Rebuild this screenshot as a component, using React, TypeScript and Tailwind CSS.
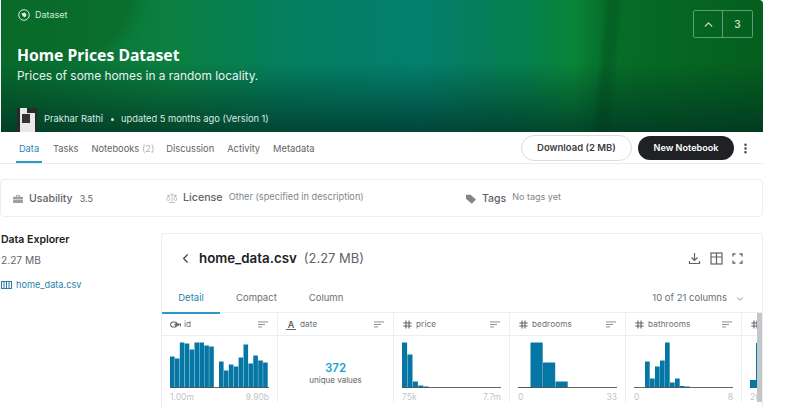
import React from "react";
import { ChevronUp, ChevronLeft, ChevronDown, Scale, MoreVertical } from "lucide-react";

const Sort = () => (
  <svg width="10" height="8" viewBox="0 0 10 8" className="text-[#80868b]" fill="currentColor">
    <rect x="0" y="0.5" width="10" height="0.9" />
    <rect x="0" y="3" width="7" height="0.9" />
    <rect x="0" y="5.5" width="4" height="0.9" />
  </svg>
);

const HashGlyph = ({ className }: { className?: string }) => (
  <svg width="9" height="9" viewBox="0 0 9 9" fill="none" stroke="#5f6368" strokeWidth="1.1" className={className}>
    <path d="M3 0.5v8M6 0.5v8M0.3 3h8.4M0.3 6h8.4" />
  </svg>
);

const Hist = ({ w, bars, start = 0, bw }: { w: number; bars: number[]; start?: number; bw: number }) => (
  <svg width={w} height="47" viewBox={`0 0 ${w} 47`} className="block">
    {bars.map((h, i) =>
      h > 0 ? <rect key={i} x={start + i * bw} y={46.5 - h} width={bw - 0.3} height={h} fill="#0677a5" /> : null
    )}
    <rect x="0" y="46" width={w} height="0.8" fill="#3c4043" />
  </svg>
);

const Column = ({
  icon,
  name,
  children,
  min,
  max,
}: {
  icon: React.ReactNode;
  name: string;
  children: React.ReactNode;
  min?: string;
  max?: string;
}) => (
  <div className="w-[116px] shrink-0 border-r border-[#eceef0]">
    <div className="h-[23px] pt-[1px] flex items-center pl-2 pr-[9px] border-b border-[#eceef0]">
      <span className="w-[11px] flex items-center shrink-0">{icon}</span>
      <span className="text-[8.2px] tracking-[0.1px] text-[#6b6f74] ml-[3px] flex-1">{name}</span>
      <Sort />
    </div>
    <div className="h-[66px] px-2 pt-[5px]">
      {children}
      {min !== undefined && (
        <div className="flex justify-between text-[8.5px] leading-[10px] mt-[4px] text-[#c2c5c9]">
          <span>{min}</span>
          <span>{max}</span>
        </div>
      )}
    </div>
  </div>
);

const HashIcon = <HashGlyph className="ml-[1px]" />;

export default function App() {
  return (
    <div className="w-[800px] h-[408px] overflow-hidden bg-white font-['Inter',sans-serif]">
      <div className="w-[763px]">
        <header className="relative ml-[1px] h-[132px] overflow-hidden rounded-tr-[4px] pl-[16px] text-white bg-[linear-gradient(90deg,#086a2c_0%,#0b8040_22%,#047f62_39%,#03806f_55%,#067d5a_63%,#05804c_69%,#0a8538_75%,#05702a_79%,#066a24_84%,#055f1e_100%)]">
          <div className="absolute -left-[60px] -top-[90px] w-[200px] h-[150px] rounded-full bg-[#0a6a28]/70 blur-[6px]" />
          <div className="absolute left-[600px] -top-[20px] w-[14px] h-[170px] rotate-[5deg] bg-[#04551f]/50 blur-[2px]" />
          <div className="absolute inset-x-0 bottom-0 h-[70px] bg-[linear-gradient(180deg,rgba(0,40,30,0)_0%,rgba(0,45,35,0.7)_100%)]" />
          <div className="relative flex items-center h-[30px]">
            <svg width="12" height="12" viewBox="0 0 12 12" fill="none" className="ml-[1px]">
              <circle cx="6" cy="6" r="5.3" stroke="#d7efe4" strokeWidth="1" />
              <path d="M3.5 4.5 L7 3.5 L8.5 6 L7 8.5 L4.5 7 Z" fill="#d7efe4" />
            </svg>
            <span className="ml-[5px] text-[9px] text-[#cfe9dc]">Dataset</span>
          </div>
          <h1 className="relative mt-[13px] text-[15.7px] leading-[24px] font-bold font-['Noto_Sans',sans-serif]">
            Home Prices Dataset
          </h1>
          <p className="relative text-[11.9px] leading-[18px] text-[#e6f4ee]">Prices of some homes in a random locality.</p>
          <div className="absolute left-[16px] bottom-0 flex h-[24px]">
            <div className="w-[20px] h-[24px] bg-[#e8e8e8] relative overflow-hidden">
              <div className="absolute left-0 top-0 w-[3px] h-[24px] bg-[#2a2a2a]" />
              <div className="absolute right-0 top-0 w-[2px] h-[24px] bg-[#2a2a2a]" />
              <div className="absolute left-[5px] top-[6px] w-[8px] h-[9px] bg-[#333]" />
              <div className="absolute left-[10px] top-0 w-[10px] h-[5px] bg-[#2a2a2a]" />
            </div>
            <div className="flex items-center h-[22px]">
              <span className="ml-[7px] text-[9.4px] text-[#d6ebe2]">Prakhar Rathi</span>
              <span className="ml-[8px] w-[3px] h-[3px] rounded-full bg-[#d6ebe2]" />
              <span className="ml-[7px] text-[9.3px] text-[#d6ebe2]">updated 5 months ago (Version 1)</span>
            </div>
          </div>
          <div className="absolute right-[10px] top-[10px] flex w-[60px] h-[28px] rounded-[2px] border border-[#5f9c78]">
            <div className="w-[29px] flex items-center justify-center border-r border-[#5f9c78]">
              <ChevronUp size={13} strokeWidth={2.5} className="text-[#c4dccf]" />
            </div>
            <div className="flex-1 flex items-center justify-center text-[10px] font-semibold text-[#c4dccf]">3</div>
          </div>
        </header>

        <nav className="h-[32px] flex items-center border-b border-[#e8eaed] pl-[16px] text-[#5f6368] text-[9.3px]">
          <div className="relative h-[31px] w-[26px] pt-[2px] flex items-center justify-center text-[#2a86b4]">
            Data
            <div className="absolute left-0 right-0 bottom-0 h-[2px] bg-[#2a9ac6]" />
          </div>
          <span className="ml-[11px] mt-[2px]">Tasks</span>
          <span className="ml-[13px] mt-[2px]">Notebooks <span className="text-[#b0b3b8]">(2)</span></span>
          <span className="ml-[12px] mt-[2px]">Discussion</span>
          <span className="ml-[13px] mt-[2px]">Activity</span>
          <span className="ml-[13px] mt-[2px]">Metadata</span>
          <div className="ml-auto flex items-center mt-[1px]">
            <div className="w-[111px] h-[26px] flex items-center justify-center rounded-full border border-[#dadce0] text-[9.5px] font-semibold text-[#3c4043]">
              Download (2 MB)
            </div>
            <div className="ml-[6px] w-[96px] h-[24px] flex items-center justify-center rounded-full bg-[#202124] text-[9.1px] font-semibold text-white">
              New Notebook
            </div>
            <MoreVertical size={13} strokeWidth={2.5} className="ml-[5px] mr-[11px] text-[#3c4043]" />
          </div>
        </nav>

        <section className="mt-[15px] h-[38px] pt-[1px] rounded-[4px] border border-[#eceef0] flex items-center relative text-[#5f6368]">
          <div className="w-[165px] flex items-center pl-[12px] shrink-0">
            <svg width="10" height="9" viewBox="0 0 11 10" fill="#9aa0a6">
              <path d="M3.5 3V1.2h4V3H11v2.8H0V3zM4.5 2v1h2V2zM0 6.5h11V10H0z" />
            </svg>
            <span className="ml-[6px] text-[10.5px] font-medium">Usability</span>
            <span className="ml-[7px] text-[9px]">3.5</span>
          </div>
          <div className="w-[300px] flex items-center shrink-0">
            <Scale size={12} strokeWidth={1.3} className="text-[#a8adb2]" />
            <span className="ml-[5px] text-[10.7px] font-medium">License</span>
            <span className="ml-[6px] text-[9.2px] text-[#80868b] -mt-[3px]">Other (specified in description)</span>
          </div>
          <div className="flex items-center">
            <svg width="10" height="10" viewBox="0 0 10 10" fill="#80868b">
              <path d="M0 0.8h4.5L10 5.6 5.8 9.8 0 4.8z" />
            </svg>
            <span className="ml-[6px] text-[10.5px] font-medium">Tags</span>
            <span className="ml-[6px] text-[9px] text-[#80868b] -mt-[3px]">No tags yet</span>
          </div>
        </section>

        <div className="flex mt-[16px]">
          <aside className="w-[161px] shrink-0 pl-[1px] pt-[1px]">
            <div className="text-[10.5px] leading-[12px] font-semibold text-[#202124]">Data Explorer</div>
            <div className="text-[10.2px] leading-[12px] text-[#5f6368] mt-[8px]">2.27 MB</div>
            <div className="flex items-center mt-[13px] text-[9.2px] leading-[12px] text-[#2a7fae]">
              <svg width="11" height="8" viewBox="0 0 11 8" fill="#2a7fae" className="mr-[4px]">
                <path d="M0 0h11v8H0zM1 1v6h1.5V1zM3.5 1v6H5V1zM6 1v6h1.5V1zM8.5 1v6H10V1z" fillRule="evenodd" />
              </svg>
              home_data.csv
            </div>
          </aside>

          <main className="flex-1 rounded-t-[4px] border border-b-0 border-[#eceef0] h-[180px] overflow-hidden">
            <div className="h-[45px] pt-[4px] flex items-center pl-[16px] pr-[19px]">
              <ChevronLeft size={15} strokeWidth={1.8} className="text-[#3c4043]" />
              <span className="ml-[6px] text-[13.3px] font-semibold text-[#202124]">home_data.csv</span>
              <span className="ml-[7px] text-[13px] text-[#5f6368]">(2.27 MB)</span>
              <div className="ml-auto flex items-center gap-[9px] text-[#5f6368]">
                <svg width="13" height="13" viewBox="0 0 13 13" fill="none" stroke="currentColor" strokeWidth="1.2">
                  <path d="M6.5 1v7.5M3.5 5.5l3 3 3-3M1.5 9v2.5h10V9" />
                </svg>
                <svg width="13" height="13" viewBox="0 0 13 13" fill="none" stroke="currentColor" strokeWidth="1.2">
                  <rect x="1" y="1" width="11" height="11" />
                  <path d="M1 5h11M6.5 1v11" />
                </svg>
                <svg width="11" height="11" viewBox="0 0 11 11" fill="none" stroke="currentColor" strokeWidth="1.3">
                  <path d="M1 3.5V1h2.5M7.5 1H10v2.5M10 7.5V10H7.5M3.5 10H1V7.5" />
                </svg>
              </div>
            </div>
            <div className="h-[34px] pt-[6px] flex items-center text-[9.5px] text-[#6b6f74] border-b border-[#eceef0] pr-[17px]">
              <div className="relative h-[28px] w-[58px] flex items-center justify-center text-[#2a7fae]">
                Detail
                <div className="absolute left-0 right-0 bottom-[-1px] h-[2px] bg-[#2a9ac6]" />
              </div>
              <span className="ml-[16px]">Compact</span>
              <span className="ml-[32px]">Column</span>
              <span className="ml-auto">10 of 21 columns</span>
              <ChevronDown size={10} strokeWidth={1.8} className="ml-[8px]" />
            </div>
            <div className="relative flex overflow-hidden">
              <Column
                icon={
                  <svg width="11" height="7" viewBox="0 0 12 7" fill="none" stroke="#5f6368" strokeWidth="1.2" className="shrink-0">
                    <rect x="0.7" y="0.7" width="7" height="5.6" rx="2.8" />
                    <path d="M5 3h6.5v2.5M5 4.2h5" />
                  </svg>
                }
                name="id"
                min="1.00m"
                max="9.90b"
              >
                <Hist
                  w={99}
                  bw={4.9}
                  bars={[31, 29, 45, 44, 38, 45, 45, 42, 41, 0, 26, 17, 23, 21, 30, 43, 24, 32, 27, 25]}
                />
              </Column>
              <Column
                icon={
                  <span className="w-[10px] text-[9px] leading-[9px] font-semibold text-[#5f6368] text-center border-b border-[#5f6368]">
                    A
                  </span>
                }
                name="date"
              >
                <div className="text-center pt-[20px]">
                  <div className="text-[11.5px] leading-[14px] font-semibold text-[#20a4cf]">372</div>
                  <div className="text-[8px] leading-[10px] text-[#5f6368]">unique values</div>
                </div>
              </Column>
              <Column icon={HashIcon} name="price" min="75k" max="7.7m">
                <Hist w={99} bw={5.4} bars={[45, 33, 6, 2, 1]} />
              </Column>
              <Column icon={HashIcon} name="bedrooms" min="0" max="33">
                <Hist w={99} bw={12.5} start={0} bars={[0.5, 45, 25, 6]} />
              </Column>
              <Column icon={HashIcon} name="bathrooms" min="0" max="8">
                <Hist w={99} bw={5} start={11} bars={[26, 9, 21, 27, 45, 5, 9, 1.5, 1]} />
              </Column>
              <div className="w-[20px] shrink-0 pl-[8px]">
                <div className="h-[23px] pt-[1px] flex items-center border-b border-[#eceef0] -ml-[8px] pl-[8px]">
                  <HashGlyph className="ml-[1px]" />
                </div>
                <div className="pt-[5px] flex items-end h-[52px]">
                  <div className="w-[6px] h-[8px] bg-[#0677a5]" />
                  <div className="w-[1px] h-[45px] bg-[#0677a5]" />
                </div>
                <div className="text-[8.5px] leading-[10px] mt-[4px] text-[#c2c5c9]">20</div>
              </div>
              <div className="absolute right-0 top-0 w-[5px] h-[120px] bg-[#c4c7c9]" />
            </div>
          </main>
        </div>
      </div>
    </div>
  );
}
